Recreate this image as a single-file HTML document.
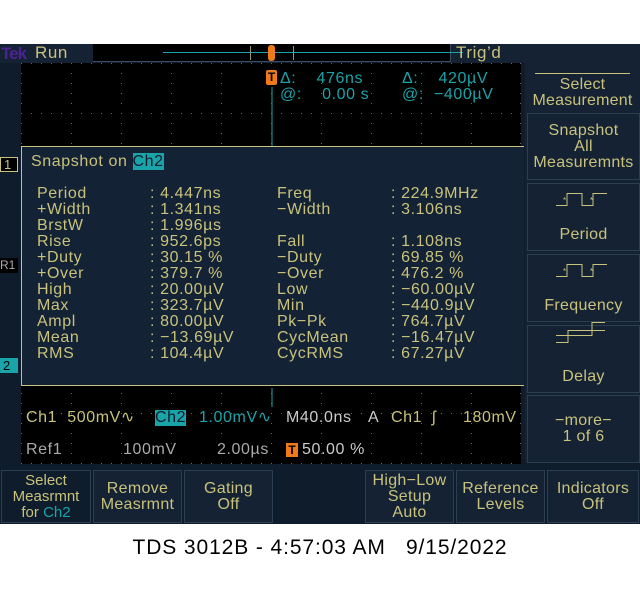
<!DOCTYPE html>
<html><head><meta charset="utf-8"><style>
*{margin:0;padding:0;box-sizing:border-box}
body{width:640px;height:600px;background:#fff;position:relative;overflow:hidden;font-family:"Liberation Sans",sans-serif;}
.a{position:absolute;white-space:pre}
.k{color:#c9c27c}
.c{color:#1aa3a8}
.t{font-size:16px;letter-spacing:0.6px;line-height:16px}
.btn{position:absolute;background:#142234;border:1px solid #2c3e52;color:#c9c27c;font-size:16px;letter-spacing:.3px;text-align:center;line-height:16px;display:flex;align-items:center;justify-content:center;white-space:nowrap}
</style></head><body>
<div class="a" style="left:0;top:44px;width:640px;height:480px;background:#0f1c2b"></div>
<!-- top bar -->
<div class="a" style="left:0;top:44px;width:640px;height:19px;background:#142234"></div>
<div class="a" style="left:1px;top:44px;color:#4b2390;font-weight:bold;font-size:17px;letter-spacing:-1px">Tek</div>
<div class="a t k" style="left:35px;top:45px;font-size:17px">Run</div>
<div class="a" style="left:93px;top:44px;width:358px;height:18px;background:#000;border-bottom:1px solid #3a4a60;border-right:1px solid #3a4a60"></div>
<div class="a" style="left:163px;top:52px;width:300px;height:1px;background:#1aa3a8"></div>
<div class="a" style="left:250px;top:46px;width:44px;height:14px;border-left:1px solid #9a9570;border-right:1px solid #9a9570"></div>
<div class="a" style="left:268px;top:45px;width:7px;height:16px;background:#f07a18;border-radius:3px"></div>
<div class="a t k" style="left:456px;top:45px;font-size:17px">Trig’d</div>
<!-- graticule -->
<div class="a" style="left:21px;top:63px;width:500px;height:401px;background:#000"></div>
<svg class="a" style="left:21px;top:63px" width="500" height="402">
<g stroke="#666" stroke-width="1" stroke-dasharray="1 9">
<line x1="0" y1="0.5" x2="500" y2="0.5"/>
<line x1="0.5" y1="0" x2="0.5" y2="400"/>
<line x1="499.5" y1="0" x2="499.5" y2="400"/>
<line x1="0" y1="200.5" x2="500" y2="200.5"/>
<line x1="250.5" y1="0" x2="250.5" y2="400"/>
<line x1="0" y1="400.5" x2="500" y2="400.5"/>
<line x1="0" y1="50.5" x2="500" y2="50.5"/>
<line x1="0" y1="150.5" x2="500" y2="150.5"/>
<line x1="0" y1="350.5" x2="500" y2="350.5"/>
<line x1="50.5" y1="0" x2="50.5" y2="400"/>
<line x1="100.5" y1="0" x2="100.5" y2="400"/>
<line x1="150.5" y1="0" x2="150.5" y2="400"/>
<line x1="200.5" y1="0" x2="200.5" y2="400"/>
<line x1="300.5" y1="0" x2="300.5" y2="400"/>
<line x1="350.5" y1="0" x2="350.5" y2="400"/>
<line x1="400.5" y1="0" x2="400.5" y2="400"/>
<line x1="450.5" y1="0" x2="450.5" y2="400"/>
</g>
<line x1="251" y1="24" x2="251" y2="95" stroke="#1aa3a8"/>
<line x1="251" y1="325" x2="251" y2="344" stroke="#1aa3a8"/>
</svg>
<!-- cursor readouts -->
<div class="a" style="left:266px;top:70px;width:11px;height:15px;background:#f07a18;border-radius:2px;color:#000;font-size:12px;font-weight:bold;text-align:center;line-height:15px">T</div>
<div class="a t c" style="left:280px;top:71px">Δ:    476ns</div>
<div class="a t c" style="left:280px;top:87px">@:    0.00 s</div>
<div class="a t c" style="left:402px;top:71px">Δ:    420µV</div>
<div class="a t c" style="left:402px;top:87px">@:  −400µV</div>
<!-- snapshot box -->
<div class="a" style="left:21px;top:146px;width:503px;height:240px;background:#132235;border:1px solid #c9c27c;border-right:none"></div>
<div class="a t k" style="left:31px;top:154px">Snapshot on <span style="background:#1aa3a8;color:#0f1c2b">Ch2</span></div>
<div class="a t k" style="left:37px;top:186px">Period
+Width
BrstW
Rise
+Duty
+Over
High
Max
Ampl
Mean
RMS</div>
<div class="a t k" style="left:150px;top:186px">: 4.447ns
: 1.341ns
: 1.996µs
: 952.6ps
: 30.15 %
: 379.7 %
: 20.00µV
: 323.7µV
: 80.00µV
: −13.69µV
: 104.4µV</div>
<div class="a t k" style="left:277px;top:186px">Freq
−Width

Fall
−Duty
−Over
Low
Min
Pk−Pk
CycMean
CycRMS</div>
<div class="a t k" style="left:391px;top:186px">: 224.9MHz
: 3.106ns

: 1.108ns
: 69.85 %
: 476.2 %
: −60.00µV
: −440.9µV
: 764.7µV
: −16.47µV
: 67.27µV</div>
<!-- side markers -->
<div class="a" style="left:0;top:157px;width:18px;height:15px;border:1px solid #c9c27c;background:#000;color:#c9c27c;font-size:13px;line-height:13px;padding-left:3px">1</div>
<div class="a" style="left:0;top:258px;width:18px;height:15px;background:#000;color:#aaa;font-size:12px;line-height:15px">R1</div>
<div class="a" style="left:0;top:358px;width:18px;height:15px;background:#1aa3a8;color:#000;font-size:13px;line-height:15px;padding-left:3px">2</div>
<!-- status -->
<div class="a t k" style="left:26px;top:410px">Ch1  500mV∿</div>
<div class="a t" style="left:155px;top:410px;background:#1aa3a8;color:#0f1c2b">Ch2</div>
<div class="a t c" style="left:199px;top:410px">1.00mV∿</div>
<div class="a t" style="left:286px;top:410px;color:#ccc">M40.0ns</div>
<div class="a t" style="left:368px;top:410px;color:#ccc">A</div>
<div class="a t k" style="left:391px;top:410px">Ch1</div>
<div class="a t k" style="left:432px;top:410px">ʃ</div>
<div class="a t k" style="left:463px;top:410px">180mV</div>
<div class="a t" style="left:26px;top:442px;color:#aaa">Ref1</div>
<div class="a t" style="left:123px;top:442px;color:#aaa">100mV</div>
<div class="a t" style="left:217px;top:442px;color:#aaa">2.00µs</div>
<div class="a" style="left:286px;top:443px;width:12px;height:14px;background:#f07a18;color:#000;font-size:12px;font-weight:bold;text-align:center;line-height:14px">T</div>
<div class="a t" style="left:302px;top:442px;color:#ccc">50.00 %</div>
<!-- right menu -->
<div class="a" style="left:525px;top:63px;width:115px;height:400px;background:#142234"></div>
<div class="a" style="left:535px;top:73px;width:95px;height:1px;background:#c9c27c"></div>
<div class="a t k" style="left:525px;top:77px;width:115px;text-align:center;letter-spacing:.2px">Select
Measurement</div>
<div class="btn" style="left:527px;top:113px;width:113px;height:67px"><div>Snapshot<br>All<br>Measuremnts</div></div>
<div class="btn" style="left:527px;top:183px;width:113px;height:68px;align-items:flex-end;padding-bottom:7px">Period</div>
<div class="btn" style="left:527px;top:254px;width:113px;height:68px;align-items:flex-end;padding-bottom:7px">Frequency</div>
<div class="btn" style="left:527px;top:325px;width:113px;height:68px;align-items:flex-end;padding-bottom:7px">Delay</div>
<div class="btn" style="left:527px;top:395px;width:113px;height:68px"><div>−more−<br>1 of 6</div></div>
<svg class="a" style="left:555px;top:190px" width="60" height="160" fill="none" stroke="#c9c27c">
<path d="M1 15.5H12V3.5H27V15.5H38V3.5H52"/>
<path d="M1 86.5H12V74.5H27V86.5H38V74.5H52"/>
<path d="M1 158.5H13V146.5H50M1 151.5H37V138.5H50" transform="translate(0,-6)"/>
<text x="8" y="13" fill="#c9c27c" stroke="none" font-size="8">*</text>
<text x="35" y="13" fill="#c9c27c" stroke="none" font-size="8">*</text>
<text x="8" y="84" fill="#c9c27c" stroke="none" font-size="8">*</text>
<text x="35" y="84" fill="#c9c27c" stroke="none" font-size="8">*</text>
</svg>
<!-- bottom buttons -->
<div class="btn" style="left:1px;top:470px;width:90px;height:53px;background:#0f1c2b;font-size:15px;letter-spacing:0"><div>Select<br>Measrmnt<br>for <span style="color:#1aa3a8">Ch2</span></div></div>
<div class="btn" style="left:93px;top:470px;width:89px;height:53px"><div>Remove<br>Measrmnt</div></div>
<div class="btn" style="left:184px;top:470px;width:89px;height:53px"><div>Gating<br>Off</div></div>
<div class="btn" style="left:365px;top:470px;width:89px;height:53px"><div>High−Low<br>Setup<br>Auto</div></div>
<div class="btn" style="left:456px;top:470px;width:89px;height:53px"><div>Reference<br>Levels</div></div>
<div class="btn" style="left:547px;top:470px;width:92px;height:53px"><div>Indicators<br>Off</div></div>
<div class="a" style="left:0;top:536px;width:640px;text-align:center;font-size:21px;letter-spacing:0.9px;color:#000">TDS 3012B - 4:57:03 AM &nbsp;&nbsp;9/15/2022</div>
</body></html>
